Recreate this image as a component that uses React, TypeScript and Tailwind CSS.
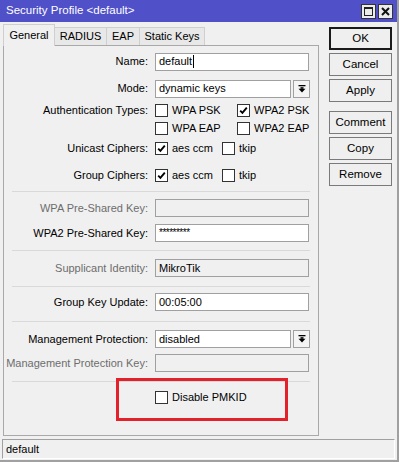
import type { ReactNode } from 'react'

const font = { fontFamily: '"Liberation Sans", Arial, sans-serif' }

function Check({ checked }: { checked?: boolean }) {
  return (
    <span className="w-[13px] h-[13px] border border-[#333333] bg-white flex items-center justify-center shrink-0">
      {checked && (
        <svg width="9" height="9" viewBox="0 0 9 9">
          <path d="M1.2 4.6 L3.4 6.8 L7.8 1.6" stroke="#000" strokeWidth="1.9" fill="none" />
        </svg>
      )}
    </span>
  )
}

function CheckItem({ checked, label, className = '' }: { checked?: boolean; label: string; className?: string }) {
  return (
    <div className={`flex items-center gap-[4px] ${className}`}>
      <Check checked={checked} />
      <span>{label}</span>
    </div>
  )
}

function Row({
  label,
  dim,
  className = '',
  children,
}: {
  label?: string
  dim?: boolean
  className?: string
  children: ReactNode
}) {
  return (
    <div className={`flex items-center ${className}`}>
      <div className={`w-[144px] text-right whitespace-nowrap ${dim ? 'text-[#6d6d6d]' : 'text-black'}`}>{label}</div>
      <div className="ml-[7px] flex items-center">{children}</div>
    </div>
  )
}

function Field({ value, disabled, w = 'w-[154px]' }: { value?: ReactNode; disabled?: boolean; w?: string }) {
  return (
    <div
      className={`${w} h-[18px] border border-[#a0a0a0] flex items-center pl-[3px] text-black ${
        disabled ? 'bg-[#f0f0f0]' : 'bg-white'
      }`}
    >
      {value}
    </div>
  )
}

function DropIcon() {
  return (
    <svg width="8" height="8" viewBox="0 0 8 8">
      <rect x="0.5" y="0" width="7" height="1.3" fill="#000" />
      <rect x="2.5" y="2.2" width="3" height="1.6" fill="#000" />
      <path d="M0.5 3.8 H7.5 L4 7.5 Z" fill="#000" />
    </svg>
  )
}

function Select({ value }: { value: string }) {
  return (
    <div className="flex items-center gap-[2px]">
      <Field value={value} w="w-[136px]" />
      <div className="w-[17px] h-[18px] border border-[#a0a0a0] bg-[#f4f4f4] flex items-center justify-center">
        <DropIcon />
      </div>
    </div>
  )
}

function Separator({ className = '' }: { className?: string }) {
  return <div className={`mx-[8px] h-px bg-[#d9d9d9] ${className}`} />
}

function Btn({ label, primary, className = '' }: { label: string; primary?: boolean; className?: string }) {
  return (
    <div
      className={`w-[63px] h-[23px] flex items-center justify-center bg-[#efefef] text-black text-[11.5px] ${
        primary ? 'border-2 border-[#1a1a1a]' : 'border border-[#7a7a7a]'
      } ${className}`}
    >
      {label}
    </div>
  )
}

function TitleBar() {
  return (
    <div className="h-[22px] bg-[#5050c8] flex items-center justify-between pl-[6px] pr-[4px]">
      <span className="text-white text-[11.5px]">Security Profile &lt;default&gt;</span>
      <div className="flex gap-[2px]">
        <div className="w-[15px] h-[15px] bg-[#ececec] border border-[#333333] flex items-center justify-center">
          <svg width="9" height="9" viewBox="0 0 9 9">
            <rect x="0.5" y="0.5" width="8" height="8" fill="none" stroke="#222" strokeWidth="1" />
            <rect x="0.5" y="0.5" width="8" height="1.5" fill="#222" />
          </svg>
        </div>
        <div className="w-[15px] h-[15px] bg-[#ececec] border border-[#333333] flex items-center justify-center">
          <svg width="9" height="9" viewBox="0 0 9 9">
            <path d="M1 1 L8 8 M8 1 L1 8" stroke="#111" strokeWidth="2" />
          </svg>
        </div>
      </div>
    </div>
  )
}

function Tabs() {
  const tab =
    'h-[18px] flex items-center justify-center whitespace-nowrap border border-l-0 border-b-0 border-[#cfcfcf] bg-[#e8e8e8] text-black'
  return (
    <div className="h-[22px] flex items-end">
      <div className="relative z-10 -mb-px h-[22px] w-[52px] flex items-center justify-center border border-b-0 border-[#cfcfcf] bg-[#f0f0f0] text-black">
        General
      </div>
      <div className={`${tab} w-[52px]`}>RADIUS</div>
      <div className={`${tab} w-[33px]`}>EAP</div>
      <div className={`${tab} w-[65px]`}>Static Keys</div>
    </div>
  )
}

function GeneralPanel() {
  return (
    <div className="relative h-[391px] w-[316px] border border-[#a9a9a9] bg-[#f0f0f0] flex flex-col">
      <Row label="Name:" className="mt-[6px] h-[19px]">
        <Field
          value={
            <span className="flex items-center">
              default
              <span className="ml-px w-px h-[13px] bg-black" />
            </span>
          }
        />
      </Row>
      <Row label="Mode:" className="mt-[8px] h-[19px]">
        <Select value="dynamic keys" />
      </Row>
      <Row label="Authentication Types:" className="mt-[5px] h-[15px]">
        <CheckItem label="WPA PSK" className="w-[82px]" />
        <CheckItem label="WPA2 PSK" checked />
      </Row>
      <Row className="mt-[3px] h-[15px]">
        <CheckItem label="WPA EAP" className="w-[82px]" />
        <CheckItem label="WPA2 EAP" />
      </Row>
      <Row label="Unicast Ciphers:" className="mt-[5px] h-[15px]">
        <CheckItem label="aes ccm" checked className="w-[67px]" />
        <CheckItem label="tkip" />
      </Row>
      <Row label="Group Ciphers:" className="mt-[12px] h-[15px]">
        <CheckItem label="aes ccm" checked className="w-[67px]" />
        <CheckItem label="tkip" />
      </Row>

      <Separator className="mt-[8px]" />
      <Row label="WPA Pre-Shared Key:" dim className="mt-[7px]">
        <Field disabled />
      </Row>
      <Row label="WPA2 Pre-Shared Key:" className="mt-[7px]">
        <Field value={<span className="text-[10px] tracking-[-0.5px]">*********</span>} />
      </Row>

      <Separator className="mt-[8px]" />
      <Row label="Supplicant Identity:" dim className="mt-[8px]">
        <Field disabled value="MikroTik" />
      </Row>

      <Separator className="mt-[9px]" />
      <Row label="Group Key Update:" className="mt-[6px]">
        <Field value="00:05:00" />
      </Row>

      <Separator className="mt-[10px]" />
      <Row label="Management Protection:" className="mt-[8px]">
        <Select value="disabled" />
      </Row>
      <Row label="Management Protection Key:" dim className="mt-[6px]">
        <Field disabled />
      </Row>

      <Separator className="mt-[9px]" />
      <Row className="mt-[9px] h-[13px]">
        <CheckItem label="Disable PMKID" />
      </Row>

      <div className="absolute left-[112px] top-[332px] w-[172px] h-[43px] border-[3px] border-[#e3212b]" />
    </div>
  )
}

export default function App() {
  return (
    <div
      className="w-[399px] h-[462px] bg-[#f0f0f0] border-r-2 border-b-2 border-[#a0a0a0] flex flex-col overflow-hidden text-[11px] leading-none"
      style={font}
    >
      <TitleBar />
      <div className="h-[417px] flex">
        <div className="ml-[3px] mt-px flex flex-col">
          <Tabs />
          <GeneralPanel />
        </div>
        <div className="ml-[10px] mt-[5px] flex flex-col">
          <Btn label="OK" primary />
          <Btn label="Cancel" className="mt-[3px]" />
          <Btn label="Apply" className="mt-[3px]" />
          <Btn label="Comment" className="mt-[9px]" />
          <Btn label="Copy" className="mt-[3px]" />
          <Btn label="Remove" className="mt-[3px]" />
        </div>
      </div>
      <div className="mx-[2px] h-[20px] border-t border-l border-[#a0a0a0] border-r border-r-white border-b border-b-white flex items-center pl-[3px] text-black">
        default
      </div>
    </div>
  )
}
